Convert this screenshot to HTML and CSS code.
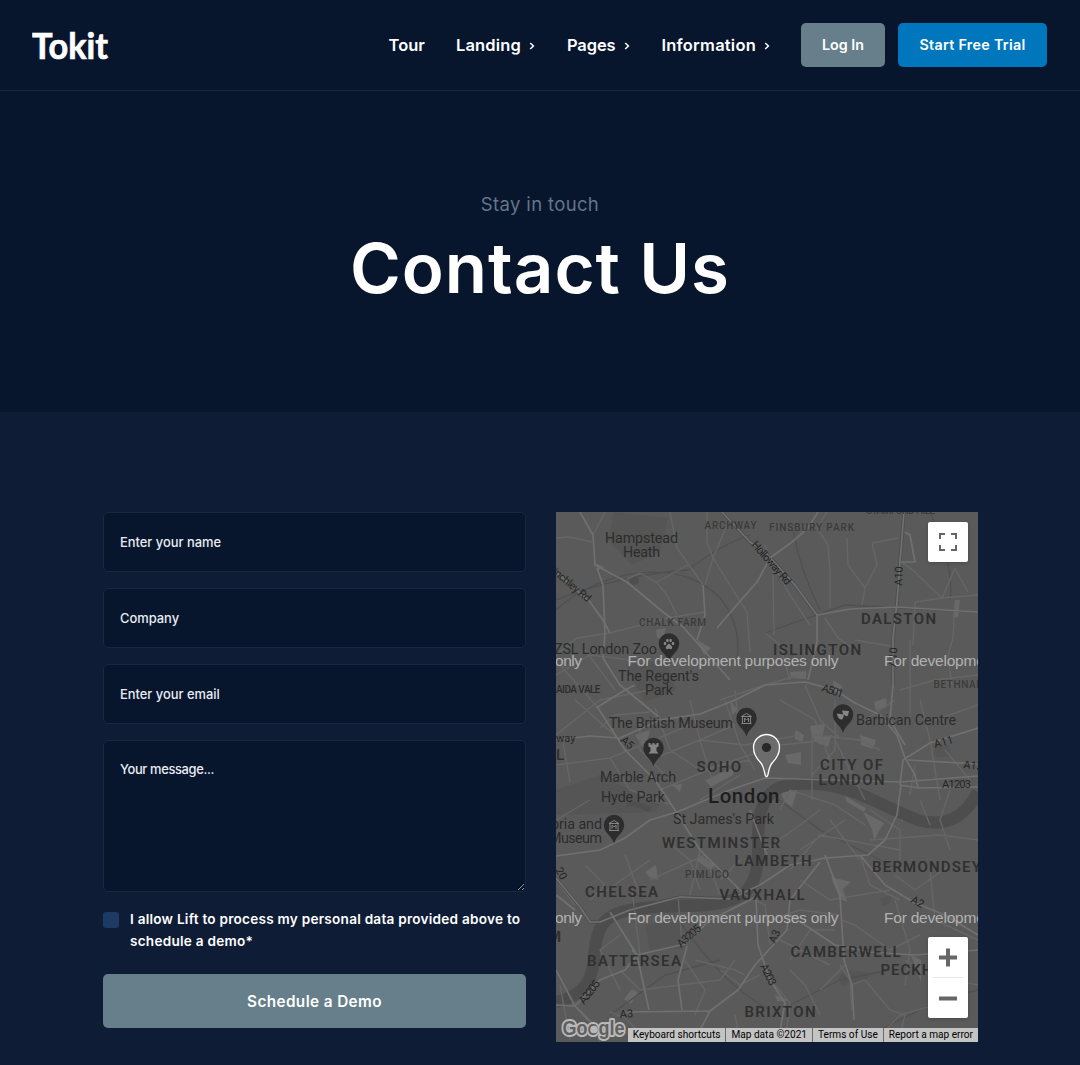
FILE: index.html
```html
<!DOCTYPE html>
<html lang="en">
<head>
<meta charset="utf-8">
<title>Tokit – Contact Us</title>
<link rel="stylesheet" href="styles.css">
</head>
<body>
<header class="header">
  <a class="logo" aria-label="Tokit"><svg width="78" height="40" viewBox="0 0 78 40"><text x="0" y="33.5" textLength="76" lengthAdjust="spacingAndGlyphs">Tokit</text></svg></a>
  <nav class="nav">
    <a class="nav-link tour">Tour</a>
    <a class="nav-link landing">Landing<svg class="chev" viewBox="0 0 6 8"><path d="M1.2 1 4.4 4 1.2 7"/></svg></a>
    <a class="nav-link pages">Pages<svg class="chev" viewBox="0 0 6 8"><path d="M1.2 1 4.4 4 1.2 7"/></svg></a>
    <a class="nav-link info">Information<svg class="chev" viewBox="0 0 6 8"><path d="M1.2 1 4.4 4 1.2 7"/></svg></a>
  </nav>
  <div class="actions">
    <a class="btn btn-login">Log In</a>
    <a class="btn btn-trial">Start Free Trial</a>
  </div>
</header>

<section class="hero">
  <p class="eyebrow">Stay in touch</p>
  <h1 class="title">Contact Us</h1>
</section>

<main class="contact">
  <form class="form">
    <input class="field" type="text" placeholder="Enter your name">
    <input class="field" type="text" placeholder="Company">
    <input class="field" type="email" placeholder="Enter your email">
    <textarea class="field message" placeholder="Your message..."></textarea>
    <label class="consent"><span class="box"></span><span>I allow Lift to process my personal data provided above to<br>schedule a demo*</span></label>
    <button class="submit" type="button">Schedule a Demo</button>
  </form>

  <div class="map">
    <svg class="tiles" viewBox="556 512 422 530" width="422" height="530">
      <defs>
        <path id="pin" d="M0 14.500C-1.800 7-10.200 4-10.200-4A10.200 10.200 0 0 1 10.200-4C10.200 4 1.800 7 0 14.500Z"/>
        <g id="museum" fill="none" stroke="#858585" stroke-width="1"><path d="M-5-5.500 0-8.500 5-5.500ZM-5 1.500H5M-4-5V1M4-5V1M-2 0V-4L0-2 2-4V0"/></g>
      </defs>
      <rect x="556" y="512" width="422" height="530" fill="#5a5a5a"/>

      <!-- parks and built-up areas -->
      <g fill="#555">
        <path d="M614 512 668 518 660 552 632 565 608 540ZM556 790 600 775 660 805 655 812 556 815ZM625 665 666 660 676 690 645 702ZM645 925 680 920 685 948 650 950Z"/>
        <path d="M838 978 848 970 872 973 865 981 842 986ZM935 745h15v12h-15ZM880 899 892 895 890 903 882 906Z"/>
      </g>
      <g fill="#696969">
        <path d="M656 630 666 628 663 638 657 638ZM790 672 806 671 806 679 791 678ZM833 680 843 687 834 692ZM810 726 825 724 821 745 812 737ZM795 730 804 735 802 742 795 739ZM812 740 832 735 828 747ZM860 735 876 740 873 749 861 745ZM874 702 886 698 887 707 876 711Z"/>
        <path d="M845 796 866 808 864 812 847 802ZM863 812 884 823 878 833 874 841 872 829ZM892 808 907 815 902 822ZM831 877 851 882 843 889 847 902 840 899ZM645 872 656 865 658 880 649 877ZM700 855 715 865 710 870 696 860ZM785 755 801 752 801 765 788 763ZM780 790 798 788 792 807 784 801Z"/>
        <path d="M624 999 632 989 638 992 631 1004ZM705 780 735 767 733 775 711 787ZM730 700 738 710 732 715ZM635 735 650 730 645 750ZM672 785 682 784 680 792ZM697 640 711 648 704 655ZM595 563 605 567 598 570ZM955 600 960 600 958 617 953 618ZM911 955 921 960 921 982ZM775 995 790 1001 777 1001Z"/>
      </g>
      <ellipse cx="634" cy="581" rx="5" ry="4" fill="#4f4f4f"/>
      <path d="M627 804Q640 803 650 810" fill="none" stroke="#4f4f4f" stroke-width="5"/>

      <!-- Thames -->
      <path fill="none" stroke="#4d4d4d" stroke-width="12" d="M556 1002C590 994 592 975 594 958C596 930 601 915 630 910C670 902 715 912 742 895C768 875 752 835 762 808C770 782 795 782 826 785C860 790 883 807 918 820C946 828 965 817 978 792"/>

      <!-- railways -->
      <g fill="none" stroke="#505050" stroke-width="1.300">
        <path d="M556 610C600 570 680 555 720 598Q742 625 737 660M556 600Q620 575 688 570 720 545 750 535M765 633 845 605 978 612M793 530Q800 570 820 610M930 512Q955 570 950 600M610 1015 665 975 720 960M665 900Q720 985 770 1010M790 1005 840 980 890 970M860 1042Q930 1000 978 990M765 790 820 830 900 870"/>
      </g>

      <!-- minor streets -->
      <g fill="none" stroke="#666" stroke-width="1.400">
        <path d="M556 538 570 537 592 542M605 512 593 535M627 579 640 573 657 583 667 595 677 615M657 582 688 565M670 512 677 548 703 585M707 512 707 542 713 558 735 593 747 612 750 652M765 545 773 572 774 635M727 525 713 558 705 585M556 655 577 638 610 633 667 618 705 612M556 675 590 655 630 660M560 665 600 710M585 650 615 690M765 633 780 645 790 680M827 512 817 528 828 545 830 572 830 608M847 538 848 565 865 588 862 605M872 543 877 565 865 588M872 543 898 538M902 562 915 572 942 598 978 595M955 568 942 598 915 602 913 645M955 568 968 592M955 602 953 638 948 655 952 685M825 618 838 638 858 652M855 640 890 646M910 640 910 720M765 550 790 595 810 625"/>
        <path d="M556 735 600 700 650 690M575 700 620 740M563 742 570 782M556 765 610 758 690 725M610 758 630 790 672 805M650 760 700 740 735 725M600 728 615 715 650 712M640 720 640 750 670 780M655 708 670 750 700 770 750 760M690 700 700 740 712 780M725 700 740 745 755 770M720 700 765 685 800 675M735 690 738 720M700 740 745 745 800 735M660 790 720 765 780 745 830 740M700 800 740 775M780 700 815 720 830 760M805 685 820 720 840 738M835 700 835 750 812 775M880 750 860 740 815 735M865 720 880 710 895 700M900 690 935 680 978 675M920 700 930 740 940 800M935 720 978 705M945 750 970 780M915 765 910 795M812 735 812 800M835 740 865 800M780 810 790 790 835 805 865 825M765 850 800 825 820 810M800 850 845 820M790 870 820 835 900 850M830 820 860 860M870 810 900 830 900 860M870 840 940 835 978 840M920 800 930 825M950 790 940 820 950 850"/>
        <path d="M556 820 590 800M585 865 605 885 590 900M600 895 650 860M625 855 640 895M650 880 705 855 720 895M700 850 690 895M665 840 690 860 700 890M720 880 740 860M556 880 575 905M620 935 600 950 620 990M632 890 640 955M678 895 682 945M695 960 735 970 745 975M720 970 740 985 760 975M620 970 640 990 720 980 735 960M685 960 705 990 695 1015M735 890 765 905 770 945M770 920 800 910 840 915M800 880 830 900 890 890M860 855 870 885 900 900M842 920 855 925 890 950 920 935M895 900 910 950 905 985M840 965 850 980 852 1010M850 985 865 980 890 1010 905 1015 900 1035M790 970 805 985 820 1015M820 990 845 965M780 940 830 965M790 960 810 930 835 930M905 960 930 975 978 985M930 870 935 920 978 940M895 875 915 890 950 865M875 1042 900 1015 935 1005M735 1015 740 1042M610 1012 625 1018 650 1042M560 985 570 1040M580 1010 595 1025 600 1042M775 985 790 1003 785 1042"/>
      </g>

      <!-- main roads -->
      <g fill="none" stroke="#4e4e4e" stroke-width="3.400" stroke-linejoin="round">
        <path d="M722 512 750 542 765 552 795 585 817 615M904 512 900 562 897 602 893 638 893 685M556 878 580 907 590 922 600 922 630 910 680 897 730 899 760 885"/>
      </g>
      <g fill="none" stroke="#707070" stroke-width="1.700" stroke-linejoin="round">
        <path d="M580 512 593 535 595 565 627 582 663 612 683 627 708 655 730 680M597 568 603 585 605 632 603 658 620 685 660 718M556 572 590 602 603 620 610 633M703 585 705 615 697 640M717 628 735 607 757 582 770 558 792 542 808 528 818 512M722 512 750 542 765 552 795 585 817 615 817 642 808 680M904 512 900 562 897 602 893 638 893 685 890 720 905 745M905 532 910 535 915 562 901 562M817 615 850 609 897 607 978 612"/>
        <path d="M556 740 590 736 620 738 660 720 700 714 735 700 765 685 805 682 835 690 855 703 880 715 897 735 905 758 915 775 918 788 900 785 903 760 930 743 978 728M908 760 978 764M900 782 978 776M918 788 978 787M596 708 625 690 635 685M598 708 625 750 655 780 675 810M556 856 600 850 625 838 650 820 677 812 730 790M901 785 897 815 885 840 868 855 825 858M730 790 765 778 900 782M750 810 767 855M675 810 700 850 745 895"/>
        <path d="M556 878 580 907 590 922 600 922 630 910 680 897 730 899 760 885 790 865 825 858M556 895 575 910M610 912 637 955 649 1010M632 950 637 955 685 944 710 920 756 897M556 1005 575 1006 600 980 625 970 637 955M687 946 678 980 682 1010M625 1012 710 1011 738 990 755 965 787 930 790 900 820 862M756 897 758 945 770 980 785 1003 778 1042M710 1011 700 1030 690 1042M790 915 835 945 870 952 915 955 978 950M825 855 840 895 844 960 852 985 854 1020M860 855 885 885 915 903 945 915 978 935M556 970 575 1006 590 1022"/>
      </g>

      <g class="places">
        <text x="605" y="543" textLength="73">Hampstead</text><text x="623" y="557" textLength="37">Heath</text>
        <text x="554" y="654" textLength="103">ZSL London Zoo</text>
        <text x="618" y="681" textLength="81">The Regent's</text><text x="645" y="695" textLength="28">Park</text>
        <text x="609" y="728" textLength="124">The British Museum</text>
        <text x="856" y="724.500" textLength="100">Barbican Centre</text>
        <text x="600" y="781.500" textLength="76">Marble Arch</text><text x="601" y="801.500" textLength="64">Hyde Park</text>
        <text x="673" y="823.500" textLength="101">St James's Park</text>
        <text x="551" y="828.500" textLength="51">oria and</text><text x="549" y="842.500" textLength="53">Museum</text>
      </g>
      <g class="areas">
        <text x="861" y="623.500" textLength="75">DALSTON</text><text x="773" y="654.500" textLength="88">ISLINGTON</text>
        <text x="696.500" y="771.500" textLength="44.500">SOHO</text><text x="820" y="770" textLength="63">CITY OF</text><text x="818.500" y="785" textLength="66">LONDON</text>
        <text x="662" y="847.500" textLength="118">WESTMINSTER</text><text x="734.500" y="866" textLength="77">LAMBETH</text>
        <text x="872" y="871.500" textLength="109">BERMONDSEY</text><text x="585" y="896.500" textLength="73">CHELSEA</text>
        <text x="719.500" y="900" textLength="85">VAUXHALL</text><text x="587" y="965.500" textLength="94">BATTERSEA</text>
        <text x="790.500" y="957" textLength="110">CAMBERWELL</text><text x="880.500" y="974.500" textLength="77">PECKHAM</text><text x="744.500" y="1016.500" textLength="71">BRIXTON</text>
        <text x="556" y="760">L</text><text x="548" y="942">M</text>
      </g>
      <g class="small-areas">
        <text x="704.500" y="529" textLength="52">ARCHWAY</text><text x="769" y="530.500" textLength="85">FINSBURY PARK</text>
        <text x="639" y="625.500" textLength="67">CHALK FARM</text><text x="685" y="877.500" textLength="44">PIMLICO</text>
        <text x="933.500" y="688" textLength="86">BETHNAL GREEN</text><text x="866" y="513.500" textLength="69">STAMFORD HILL</text>
        <text x="556" y="693" textLength="44.500" class="dark">AIDA VALE</text>
      </g>
      <text class="city" x="708" y="803" textLength="71.500">London</text>
      <g class="roads">
        <text transform="translate(552 573) rotate(40)" textLength="46">inchley Rd</text>
        <text transform="translate(751 545) rotate(49)" textLength="54">Holloway Rd</text>
        <text transform="translate(902 586) rotate(-88)">A10</text><text transform="translate(896 667) rotate(-86)">A10</text>
        <text transform="translate(821 691) rotate(18)" textLength="22">A501</text>
        <text transform="translate(935 748) rotate(-15)">A11</text><text transform="translate(963 768) rotate(7)">A13</text>
        <text transform="translate(942 788)" textLength="29">A1203</text>
        <text transform="translate(620 741) rotate(42)">A5</text><text x="556" y="742">way</text>
        <text transform="translate(910 902) rotate(28)">A2</text><text transform="translate(775 944) rotate(-65)">A3</text>
        <text transform="translate(681 948) rotate(-42)" textLength="28">A3205</text><text transform="translate(584 1005) rotate(-52)" textLength="27">A3205</text>
        <text transform="translate(760 966) rotate(64)" textLength="23">A203</text><text transform="translate(620 1018) rotate(-4)">A3</text>
        <text transform="translate(555 870) rotate(60)">20</text>
      </g>

      <g fill="#2d2d2d">
        <g transform="translate(669 647.500)"><use href="#pin"/><g fill="#858585"><ellipse cx="-4" cy="-4" rx="1.300" ry="1.800"/><ellipse cx="-1.600" cy="-7" rx="1.300" ry="1.800"/><ellipse cx="1.600" cy="-7" rx="1.300" ry="1.800"/><ellipse cx="4" cy="-4" rx="1.300" ry="1.800"/><path d="M0-4Q4-1 3 1Q2 2 0 1Q-2 2-3 1Q-4-1 0-4Z"/></g></g>
        <g transform="translate(746.500 722)"><use href="#pin"/><use href="#museum"/></g>
        <g transform="translate(653.500 752)"><use href="#pin"/><path fill="#858585" d="M-5-9H-3V-7.500H-1V-9H1V-7.500H3V-9H5V-5.500L3-4.500V-1L5 1.500H-5L-3-1V-4.500L-5-5.500Z"/></g>
        <g transform="translate(614 829)"><use href="#pin"/><use href="#museum"/></g>
        <g transform="translate(843 718.500)"><use href="#pin"/><path fill="#858585" d="M-1-8 6-7.500 5-3Q3-1 1-4L0-4.500ZM-6-5 1-4 0 0Q-2 2-4 0Q-6-2-6-5Z"/></g>
      </g>
      <path d="M766.500 776.800C764 776.800 765.500 768 760.500 762.500C756.500 758.500 753.500 753.500 753.500 747.500A13 13 0 0 1 779.500 747.500C779.500 753.500 776.500 758.500 772.500 762.500C767.500 768 769 776.800 766.500 776.800Z" fill="#6c6c6c" stroke="#fff" stroke-width="1.300"/><circle cx="766.500" cy="747.500" r="4.600" fill="#292929"/>

      <g class="watermark">
        <text x="555" y="666" textLength="27">only</text><text x="627.500" y="666" textLength="211">For development purposes only</text><text x="884" y="666" textLength="211">For development purposes only</text>
        <text x="555" y="922.500" textLength="27">only</text><text x="627.500" y="922.500" textLength="211">For development purposes only</text><text x="884" y="922.500" textLength="211">For development purposes only</text>
      </g>
      <text class="google" x="562.500" y="1034.500" textLength="62" lengthAdjust="spacingAndGlyphs">Google</text>
      <circle cx="594" cy="1029.500" r="3.800" fill="#b9b9b9"/>
    </svg>
    <button class="map-btn fullscreen" type="button" aria-label="Toggle fullscreen"><svg width="20" height="20" viewBox="0 0 20 20"><path d="M2 7V2H7M13 2H18V7M18 13V18H13M7 18H2V13"/></svg></button>
    <div class="map-btn zoom"><svg width="40" height="81" viewBox="0 0 40 81"><path d="M11 20.500H29M20 11.500V29.500M11 61.500H29"/><path class="rule" d="M5 40.500H35"/></svg></div>
    <div class="legal"><span>Keyboard shortcuts</span><span>Map data ©2021</span><span>Terms of Use</span><span>Report a map error</span></div>
  </div>
</main>
</body>
</html>
```
FILE: styles.css
```css
* { box-sizing: border-box; }
body {
  margin: 0;
  height: 1065px;
  overflow: hidden;
  background: #0e1c36;
  color: #fff;
  font-family: Inter, "Open Sans", sans-serif;
}
.header {
  height: 91px;
  display: flex;
  align-items: center;
  padding: 0 33px 1px 32px;
  background: #07152d;
  border-bottom: 1px solid #1a2740;
}
.logo { display: flex; }
.logo text { fill: #fff; stroke: #fff; stroke-width: .7px; font: 700 36px Lato, sans-serif; }
.nav { display: flex; gap: 31px; margin-left: auto; }
.nav-link { display: flex; align-items: center; font-size: 16.500px; font-weight: 600; line-height: 24px; white-space: nowrap; }
.landing { letter-spacing: .15px; }
.pages { letter-spacing: -.1px; }
.info { letter-spacing: .22px; }
.chev { width: 6px; height: 8px; margin: 2px 1px 0 8px; fill: none; stroke: #fff; stroke-width: 1.5; }
.actions { display: flex; gap: 13px; margin-left: 30px; }
.btn { height: 44px; display: flex; align-items: center; justify-content: center; border-radius: 5px; font-size: 14.300px; font-weight: 600; }
.btn-login { width: 84px; background: #667f8a; }
.btn-trial { width: 149px; background: #0077bc; letter-spacing: .3px; }

.hero { height: 321px; padding-top: 98px; background: #07152d; text-align: center; }
.eyebrow { margin: 0; font-size: 18.500px; line-height: 30px; color: #647688; letter-spacing: .35px; }
.title { margin: 6px 0 0; font-size: 69px; line-height: 86px; font-weight: 600; letter-spacing: 1px; }

.contact { display: flex; gap: 30px; padding: 100px 102px 0 103px; }
.form { width: 423px; display: flex; flex-direction: column; }
.field {
  width: 100%;
  height: 60px;
  margin: 0 0 16px;
  padding: 0 16px;
  border: 1px solid #1a2740;
  border-radius: 5px;
  background: #07152d;
  color: #fff;
  font: 500 12.900px Inter, sans-serif;
}
.field::placeholder { color: #e9edf3; opacity: 1; }
.message { height: 152px; padding-top: 21px; resize: vertical; margin-bottom: 16px; }
.message::placeholder { letter-spacing: -.35px; }
.consent { display: flex; gap: 11px; font-size: 13.600px; font-weight: 600; line-height: 22px; white-space: nowrap; letter-spacing: .24px; }
.box { width: 16px; height: 16px; margin-top: 4px; border-radius: 3px; background: #1c3a63; flex: none; }
.submit { height: 54px; margin: 22px 0 0; border: 0; border-radius: 5px; background: #667f8a; color: #fff; font: 600 15.300px Inter, sans-serif; letter-spacing: .4px; }

.map { position: relative; width: 422px; height: 530px; overflow: hidden; }
.tiles { display: block; font-family: Roboto, sans-serif; }
.places { font-size: 14.300px; fill: #2c2c2c; }
.areas { font-size: 15px; font-weight: 600; fill: #303030; }
.small-areas { font-size: 10px; font-weight: 500; fill: #3b3b3b; }
.small-areas .dark { fill: #2c2c2c; }
.city { font-size: 20.500px; font-weight: 500; fill: #1e1e1e; }
.roads { font-size: 11px; fill: #252525; }
.watermark { font: 15.500px "Liberation Sans", sans-serif; fill: #b2b2b2; }
.google { font: 700 21px "Liberation Sans", sans-serif; fill: #606060; stroke: #b9b9b9; stroke-width: 4px; paint-order: stroke; stroke-linejoin: round; }
.map-btn { position: absolute; right: 10px; width: 40px; border: 0; border-radius: 2px; background: #fff; box-shadow: 0 1px 4px -1px rgba(0,0,0,.3); padding: 0; }
.map-btn path { fill: none; stroke: #666; stroke-width: 2; }
.fullscreen { top: 10px; height: 40px; display: grid; place-items: center; }
.zoom { bottom: 24px; height: 81px; }
.map-btn.zoom path { stroke-width: 4; }
.map-btn.zoom .rule { stroke: #e6e6e6; stroke-width: 1; }
.legal { position: absolute; right: 0; bottom: 0; display: flex; height: 14px; background: #c4c4c4; color: #000; font: 10.100px/14px Roboto, sans-serif; white-space: nowrap; }
.legal span { padding: 0 5px; }
.legal span + span { border-left: 1px solid #6b6b6b; }
```
